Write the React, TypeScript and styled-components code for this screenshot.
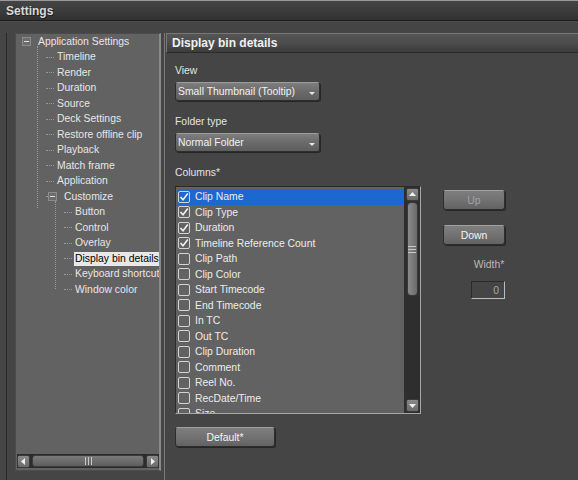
import React, { FC } from "react";
import styled, { createGlobalStyle } from "styled-components";

const GlobalStyle = createGlobalStyle`
  html, body { margin: 0; padding: 0; background: #454545; }
  body { font-family: "Liberation Sans", Arial, sans-serif; font-size: 10.4px; }
`;

const Window = styled.div`
  width: 578px;
  height: 480px;
  display: flex;
  flex-direction: column;
  background: #454545;
  overflow: hidden;
  color: #e4e4e4;
`;

const TitleBar = styled.div`
  height: 19px;
  flex: none;
  display: flex;
  align-items: center;
  padding-left: 6px;
  font-weight: bold;
  font-size: 12px;
  color: #d8d8d8;
  border-top: 1px solid #9a9a9a;
  border-bottom: 1px solid #1c1c1c;
  background: linear-gradient(#444 0%, #3c3c3c 50%, #303030 100%);
  text-shadow: 1px 1px 0 #202020;
`;

const Body = styled.div`
  flex: 1;
  display: flex;
  padding: 11px 0 0 6px;
  border-top: 1px solid #4e4e4e;
`;

const LeftFrame = styled.div`
  border-left: 1px solid #2a2a2a;
  padding: 0 0 9px 8px;
  display: flex;
`;

const TreePanel = styled.div`
  width: 146px;
  display: flex;
  flex-direction: column;
  background: #626262;
  border: 1px solid #4c4c4c;
  border-right: 2px solid #8a8a8a;
  box-sizing: border-box;
  overflow: hidden;
`;

const TreeScroll = styled.div`
  flex: 1;
  padding: 0 0 0 10px;
  overflow: hidden;
`;

const Row = styled.div<{ $depth: number }>`
  height: 15.5px;
  display: flex;
  align-items: center;
  padding-left: ${(p) => (p.$depth === 0 ? 0 : p.$depth === 1 ? 20 : 38)}px;
  position: relative;
  white-space: nowrap;
`;

const Connector = styled.span`
  width: 8px;
  border-top: 1px dotted #9a9a9a;
  margin-right: 2px;
  flex: none;
`;

const Expander = styled.span`
  width: 7px;
  height: 7px;
  border: 1px solid #8c8c8c;
  background: #6c6c6c;
  margin-right: 6px;
  margin-left: -4px;
  flex: none;
  display: flex;
  align-items: center;
  justify-content: center;
  &::after {
    content: "";
    width: 5px;
    height: 1px;
    background: #e0e0e0;
  }
`;

const Group = styled.div<{ $left: number; $height: number }>`
  position: relative;
  &::before {
    content: "";
    position: absolute;
    left: ${(p) => p.$left}px;
    top: -4px;
    height: ${(p) => p.$height}px;
    border-left: 1px dotted #9a9a9a;
  }
`;

const Label = styled.span<{ $selected?: boolean }>`
  color: ${(p) => (p.$selected ? "#000" : "#e6e6e6")};
  background: ${(p) => (p.$selected ? "#e8e8e8" : "transparent")};
  padding: 0 1px;
  line-height: 14px;
`;

const HScroll = styled.div`
  height: 14px;
  margin: 0 0 2px 1px;
  display: flex;
  align-items: center;
  background: #2c2c2c;
  gap: 2px;
`;

const ArrowBtn = styled.div`
  width: 13px;
  height: 13px;
  border-radius: 2px;
  background: linear-gradient(#8a8a8a, #6a6a6a);
  border: 1px solid #3a3a3a;
  box-sizing: border-box;
  display: flex;
  align-items: center;
  justify-content: center;
  flex: none;
`;

const HThumb = styled.div`
  flex: 1;
  height: 12px;
  border-radius: 3px;
  background: linear-gradient(#7a7a7a, #5e5e5e);
  border: 1px solid #3a3a3a;
  box-sizing: border-box;
  display: flex;
  align-items: center;
  justify-content: center;
  gap: 2px;
`;

const Grip = styled.span<{ $vertical?: boolean }>`
  background: #c8c8c8;
  width: ${(p) => (p.$vertical ? "1px" : "8px")};
  height: ${(p) => (p.$vertical ? "8px" : "1px")};
`;

const RightPanel = styled.div`
  flex: 1;
  margin-left: 3px;
  border-left: 1px solid #7a7a7a;
  display: flex;
  flex-direction: column;
`;

const PanelHeader = styled.div`
  height: 18px;
  margin-left: 1px;
  display: flex;
  align-items: center;
  padding-left: 5px;
  font-weight: bold;
  font-size: 12px;
  color: #f0f0f0;
  border-top: 1px solid #777;
  border-bottom: 1px solid #2a2a2a;
  border-left: 1px solid #777;
  background: linear-gradient(#555 0%, #4c4c4c 50%, #3c3c3c 100%);
`;

const Content = styled.div`
  padding: 11px 0 0 10px;
  display: flex;
  flex-direction: column;
`;

const FieldLabel = styled.div`
  height: 13px;
  line-height: 13px;
  margin-bottom: 5px;
  color: #e4e4e4;
`;

const Select = styled.div`
  width: 145px;
  height: 19px;
  box-sizing: border-box;
  border-radius: 3px;
  border: 1px solid #2e2e2e;
  border-top-color: #9c9c9c;
  box-shadow: 1px 1px 0 #262626;
  background: linear-gradient(#7e7e7e 0%, #6a6a6a 50%, #5e5e5e 100%);
  display: flex;
  align-items: center;
  justify-content: space-between;
  padding: 0 4px 0 2px;
  color: #f2f2f2;
  margin-bottom: 14px;
`;

const Caret = styled.span`
  width: 0;
  height: 0;
  border-left: 3px solid transparent;
  border-right: 3px solid transparent;
  border-top: 3px solid #e8e8e8;
  margin-top: 3px;
`;

const ColumnsArea = styled.div`
  display: flex;
  align-items: flex-start;
  margin-top: 2px;
`;

const ListBox = styled.div`
  width: 246px;
  height: 228px;
  box-sizing: border-box;
  border: 1px solid #a8a8a8;
  border-top-color: #2a2a2a;
  border-left-color: #2a2a2a;
  background: #626262;
  display: flex;
  overflow: hidden;
`;

const ListItems = styled.div`
  flex: 1;
  padding: 2px 0 0 1px;
  overflow: hidden;
`;

const Item = styled.div<{ $selected?: boolean }>`
  height: 15.5px;
  display: flex;
  align-items: center;
  gap: 5px;
  padding-left: 1px;
  background: ${(p) => (p.$selected ? "#1c68d0" : "transparent")};
  color: #ececec;
  white-space: nowrap;
`;

const Box = styled.span`
  width: 12px;
  height: 12px;
  box-sizing: border-box;
  border: 1px solid #d4d4d4;
  border-radius: 2px;
  flex: none;
  display: flex;
  align-items: center;
  justify-content: center;
`;

const VScroll = styled.div`
  width: 16px;
  background: #2e2e2e;
  display: flex;
  flex-direction: column;
  align-items: center;
  padding: 1px 0;
  gap: 1px;
`;

const VThumb = styled.div`
  width: 11px;
  height: 94px;
  border-radius: 4px;
  background: linear-gradient(90deg, #8a8a8a, #6a6a6a);
  border: 1px solid #3a3a3a;
  box-sizing: border-box;
  display: flex;
  flex-direction: column;
  align-items: center;
  justify-content: center;
  gap: 2px;
`;

const VSpacer = styled.div`
  flex: 1;
`;

const Side = styled.div`
  margin-left: 22px;
  padding-top: 4px;
  display: flex;
  flex-direction: column;
  align-items: flex-end;
  width: 62px;
`;

const Button = styled.div<{ $disabled?: boolean; $width?: number }>`
  width: ${(p) => p.$width ?? 62}px;
  height: 20px;
  box-sizing: border-box;
  border-radius: 3px;
  border: 1px solid #2e2e2e;
  border-top-color: #a0a0a0;
  box-shadow: 1px 1px 0 #262626;
  background: linear-gradient(#7e7e7e 0%, #727272 50%, #626262 100%);
  display: flex;
  align-items: center;
  justify-content: center;
  color: ${(p) => (p.$disabled ? "#a2a2a2" : "#f4f4f4")};
  margin-bottom: 15px;
`;

const WidthLabel = styled.div`
  align-self: center;
  margin-left: 30px;
  color: #b8b8b8;
  line-height: 13px;
  margin-top: -2px;
`;

const NumberBox = styled.div`
  width: 34px;
  height: 18px;
  box-sizing: border-box;
  margin-top: 10px;
  border: 1px solid #bcbcbc;
  border-top-color: #2a2a2a;
  border-left-color: #2a2a2a;
  color: #a8a8a8;
  display: flex;
  align-items: center;
  justify-content: flex-end;
  padding-right: 5px;
`;

const Footer = styled.div`
  padding-top: 13px;
`;

const Check: FC = () => (
  <svg width="10" height="10" viewBox="0 0 10 10">
    <path d="M1.5 5 L4 7.8 L8.8 1.5" fill="none" stroke="#f0f0f0" strokeWidth="1.6" />
  </svg>
);

const Tri: FC<{ dir: "up" | "down" | "left" | "right" }> = ({ dir }) => {
  const d = {
    up: "M1 6 L4.5 2 L8 6 Z",
    down: "M1 3 L4.5 7 L8 3 Z",
    left: "M6 1 L2 4.5 L6 8 Z",
    right: "M3 1 L7 4.5 L3 8 Z",
  }[dir];
  return (
    <svg width="9" height="9" viewBox="0 0 9 9">
      <path d={d} fill="#f0f0f0" />
    </svg>
  );
};

const settings = [
  "Timeline",
  "Render",
  "Duration",
  "Source",
  "Deck Settings",
  "Restore offline clip",
  "Playback",
  "Match frame",
  "Application",
];

const customize = [
  "Button",
  "Control",
  "Overlay",
  "Display bin details",
  "Keyboard shortcut",
  "Window color",
];

const columns: [string, boolean][] = [
  ["Clip Name", true],
  ["Clip Type", true],
  ["Duration", true],
  ["Timeline Reference Count", true],
  ["Clip Path", false],
  ["Clip Color", false],
  ["Start Timecode", false],
  ["End Timecode", false],
  ["In TC", false],
  ["Out TC", false],
  ["Clip Duration", false],
  ["Comment", false],
  ["Reel No.", false],
  ["RecDate/Time", false],
  ["Size", false],
];

const App: FC = () => {
  return (
    <Window>
      <GlobalStyle />
      <TitleBar>Settings</TitleBar>
      <Body>
        <LeftFrame>
          <TreePanel>
            <TreeScroll>
              <Row $depth={0}>
                <Expander />
                <Label>Application Settings</Label>
              </Row>
              <Group $left={11} $height={162}>
                {settings.map((s) => (
                  <Row key={s} $depth={1}>
                    <Connector />
                    <Label>{s}</Label>
                  </Row>
                ))}
                <Row $depth={1}>
                  <Connector style={{ width: 4 }} />
                  <Expander />
                  <Label>Customize</Label>
                </Row>
                <Group $left={29} $height={88}>
                  {customize.map((s) => (
                    <Row key={s} $depth={2}>
                      <Connector />
                      <Label $selected={s === "Display bin details"}>{s}</Label>
                    </Row>
                  ))}
                </Group>
              </Group>
            </TreeScroll>
            <HScroll>
              <ArrowBtn>
                <Tri dir="left" />
              </ArrowBtn>
              <HThumb>
                <Grip $vertical />
                <Grip $vertical />
                <Grip $vertical />
              </HThumb>
              <ArrowBtn>
                <Tri dir="right" />
              </ArrowBtn>
            </HScroll>
          </TreePanel>
        </LeftFrame>
        <RightPanel>
          <PanelHeader>Display bin details</PanelHeader>
          <Content>
            <FieldLabel>View</FieldLabel>
            <Select>
              <span>Small Thumbnail (Tooltip)</span>
              <Caret />
            </Select>
            <FieldLabel>Folder type</FieldLabel>
            <Select>
              <span>Normal Folder</span>
              <Caret />
            </Select>
            <FieldLabel>Columns*</FieldLabel>
            <ColumnsArea>
              <ListBox>
                <ListItems>
                  {columns.map(([name, checked], i) => (
                    <Item key={name} $selected={i === 0}>
                      <Box>{checked && <Check />}</Box>
                      <span>{name}</span>
                    </Item>
                  ))}
                </ListItems>
                <VScroll>
                  <ArrowBtn>
                    <Tri dir="up" />
                  </ArrowBtn>
                  <VThumb>
                    <Grip />
                    <Grip />
                    <Grip />
                  </VThumb>
                  <VSpacer />
                  <ArrowBtn>
                    <Tri dir="down" />
                  </ArrowBtn>
                </VScroll>
              </ListBox>
              <Side>
                <Button $disabled>Up</Button>
                <Button>Down</Button>
                <WidthLabel>Width*</WidthLabel>
                <NumberBox>0</NumberBox>
              </Side>
            </ColumnsArea>
            <Footer>
              <Button $width={100}>Default*</Button>
            </Footer>
          </Content>
        </RightPanel>
      </Body>
    </Window>
  );
};

export default App;
